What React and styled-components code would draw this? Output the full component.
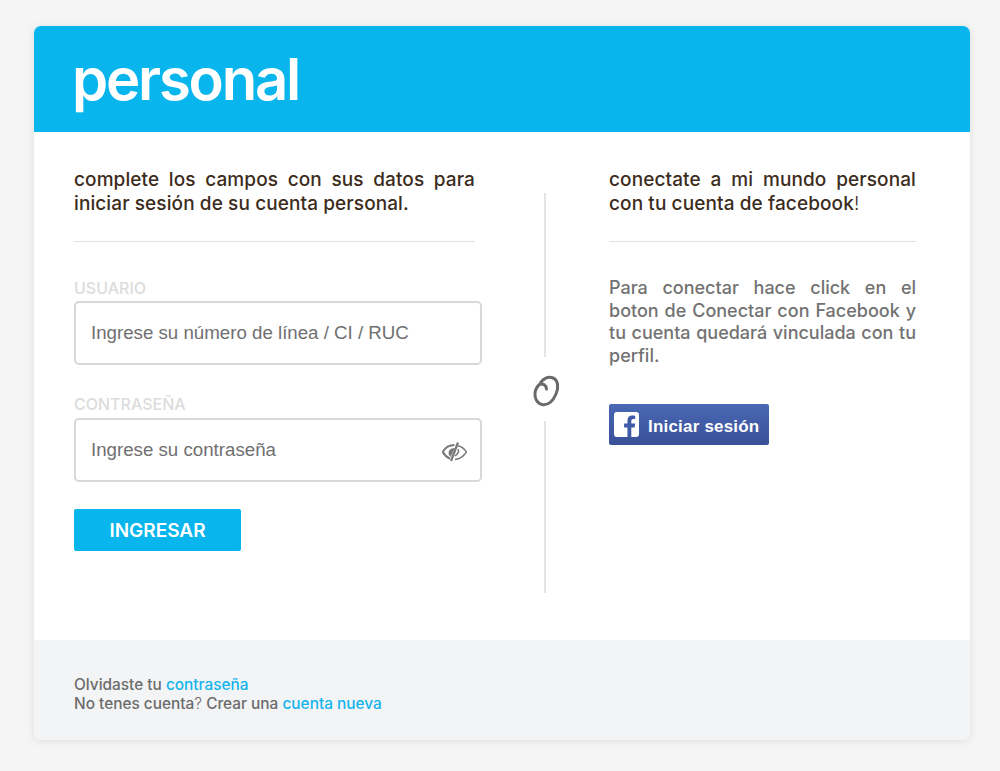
import styled, { createGlobalStyle } from "styled-components";

const GlobalStyle = createGlobalStyle`
	body {
		margin: 0;
		background: #f5f5f6;
		font-family: "Inter", "Liberation Sans", sans-serif;
	}
`;

const Page = styled.div`
	padding: 26px 30px 31px 34px;
`;

const Card = styled.div`
	height: 714px;
	display: flex;
	flex-direction: column;
	background: #fff;
	border-radius: 7px;
	overflow: hidden;
	box-shadow: 0 1px 8px rgba(0, 0, 0, 0.1);
`;

const Header = styled.header`
	height: 106px;
	display: flex;
	align-items: center;
	padding-left: 38px;
	background: #08b5ec;
`;

const Logo = styled.div`
	color: #fff;
	font-size: 58px;
	font-weight: 600;
	line-height: 1;
	letter-spacing: -2.200px;
`;

const Body = styled.main`
	flex: 1;
	display: grid;
	grid-template-columns: 408px 127px 308px;
	padding: 36px 0 0 40px;
`;

const Column = styled.section`
	display: flex;
	flex-direction: column;
	align-items: flex-start;
`;

const Title = styled.h2`
	width: ${(p) => p.$width}px;
	margin: 0;
	padding-bottom: 25px;
	border-bottom: 1px solid #dfe3e3;
	color: #3c2c20;
	font-size: 19px;
	font-weight: 500;
	line-height: 24px;
	letter-spacing: 0.1px;
	text-align: justify;
`;

const Light = styled.span`
	font-weight: 300;
`;

const Label = styled.label`
	margin-top: ${(p) => p.$top}px;
	height: ${(p) => p.$height}px;
	color: #dcdcdc;
	font-size: 16px;
	font-weight: 500;
	line-height: 18px;
`;

const Field = styled.div`
	width: 408px;
	height: 64px;
	box-sizing: border-box;
	display: flex;
	align-items: center;
	justify-content: space-between;
	padding: 0 13px 0 15px;
	border: 2px solid #d8d8d8;
	border-radius: 5px;
	color: #6f6f6f;
	font-family: "Liberation Sans", sans-serif;
	font-size: 18.7px;
`;

const EyeIcon = styled.svg`
	width: 25px;
	height: 20px;
	margin-top: 4px;
`;

const SubmitButton = styled.button`
	width: 167px;
	height: 42px;
	margin-top: 27px;
	border: none;
	border-radius: 2px;
	background: #08b5ec;
	color: #fff;
	font-family: inherit;
	font-size: 19px;
	font-weight: 600;
`;

const Separator = styled.div`
	display: flex;
	flex-direction: column;
	align-items: center;
	width: 127px;
	margin-left: -1px;
	padding-top: 25px;
`;

const SeparatorLine = styled.div`
	width: 2px;
	height: ${(p) => p.$height}px;
	background: #e4e4e4;
`;

const SwirlIcon = styled.svg`
	width: 40px;
	height: 40px;
	margin: 13px 0 11px;
`;

const Paragraph = styled.p`
	width: 307px;
	margin: 35px 0 0;
	color: #727272;
	font-size: 18px;
	font-weight: 500;
	line-height: 22.7px;
	text-align: justify;
`;

const FacebookButton = styled.button`
	display: flex;
	align-items: center;
	gap: 9px;
	width: 160px;
	height: 41px;
	margin-top: 36px;
	padding: 0 0 0 5px;
	border: none;
	border-radius: 2px;
	background: linear-gradient(#4a68b4, #3a5099);
	color: #fff;
	font-family: "Liberation Sans", sans-serif;
	font-size: 17px;
	font-weight: 700;
	letter-spacing: 0.2px;
`;

const FacebookLabel = styled.span`
	padding-top: 5px;
`;

const FacebookIcon = styled.svg`
	width: 25px;
	height: 25px;
	margin-top: 1px;
`;

const Footer = styled.footer`
	height: 100px;
	box-sizing: border-box;
	padding: 35px 40px 0;
	background: #f3f4f6;
	color: #6c6c6c;
	font-size: 15.4px;
	font-weight: 500;
	line-height: 19px;
`;

const FooterLink = styled.a`
	color: #14b4ec;
`;

export default function App() {
	return (
		<>
			<GlobalStyle />
			<Page>
				<Card>
					<Header>
						<Logo>personal</Logo>
					</Header>
					<Body>
						<Column>
							<Title $width={401}>
								complete los campos con sus datos para iniciar sesión de su
								cuenta personal.
							</Title>
							<Label $top={37} $height={22}>
								USUARIO
							</Label>
							<Field>Ingrese su número de línea / CI / RUC</Field>
							<Label $top={30} $height={23}>
								CONTRASEÑA
							</Label>
							<Field>
								Ingrese su contraseña
								<EyeIcon viewBox="0 0 25 20">
									<path
										d="M12.500 3 C7 3 3 6 0.800 10 C2.500 13 5 15.500 8 16.800"
										fill="none"
										stroke="#7a7a7a"
										strokeWidth="2.200"
									/>
									<path d="M13 6 C8 6 5.500 9 7 13 L8.500 15 Z" fill="#7a7a7a" />
									<path
										d="M15 3.500 C20 4.500 23 7.500 24.500 10 C22 14 18 17 13 17.500 M16 7 C17 9 16 12 13 14"
										fill="none"
										stroke="#7a7a7a"
										strokeWidth="1.500"
									/>
									<path d="M16 0.500 L9 19" stroke="#7a7a7a" strokeWidth="2.200" />
								</EyeIcon>
							</Field>
							<SubmitButton>INGRESAR</SubmitButton>
						</Column>
						<Separator>
							<SeparatorLine $height={164} />
							<SwirlIcon viewBox="0 0 40 40">
								<path
									d="M21.500 19 C21.500 15.500 18.500 13.500 15 14 C17 9 23 6 28 8 C33 10 34 17 31 24 C28 31 23 35.500 17 34.500 C12 33.500 9.500 28 10 23 C10.500 19 12.500 16 15 14"
									fill="none"
									stroke="#6a6a6a"
									strokeWidth="3"
									strokeLinecap="round"
									strokeLinejoin="round"
								/>
							</SwirlIcon>
							<SeparatorLine $height={172} />
						</Separator>
						<Column>
							<Title $width={307}>
								conectate a mi mundo personal con tu cuenta de facebook
								<Light>!</Light>
							</Title>
							<Paragraph>
								Para conectar hace click en el boton de Conectar con Facebook y
								tu cuenta quedará vinculada con tu perfil.
							</Paragraph>
							<FacebookButton>
								<FacebookIcon viewBox="0 0 26 26">
									<rect width="26" height="26" rx="3" fill="#fff" />
									<path
										d="M18 26 V16 H21.500 L22 12 H18 V9.500 C18 8 18.700 7.300 20 7.300 H22 V3.800 C21 3.700 20 3.600 19 3.600 C15.800 3.600 14 5.500 14 8.800 V12 H10.500 V16 H14 V26 Z"
										fill="#3f5aa6"
									/>
								</FacebookIcon>
								<FacebookLabel>Iniciar sesión</FacebookLabel>
							</FacebookButton>
						</Column>
					</Body>
					<Footer>
						Olvidaste tu <FooterLink>contraseña</FooterLink>
						<br />
						No tenes cuenta<Light>?</Light> Crear una{" "}
						<FooterLink>cuenta nueva</FooterLink>
					</Footer>
				</Card>
			</Page>
		</>
	);
}
